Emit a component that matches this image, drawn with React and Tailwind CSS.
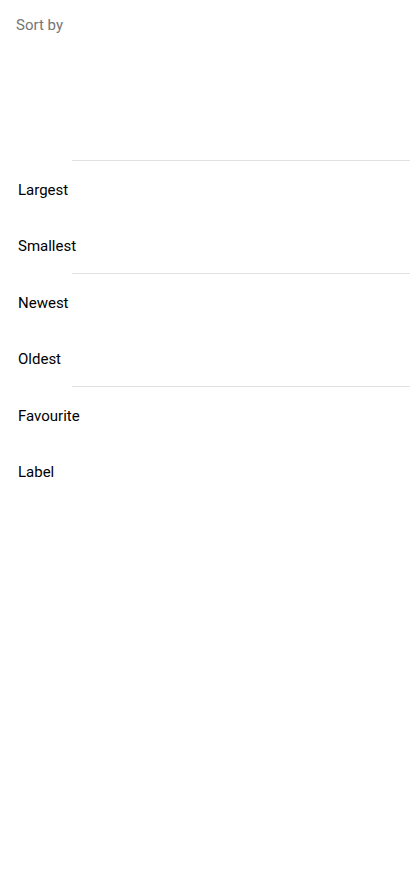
import React from 'react';

const groups = [
  ['Largest', 'Smallest'],
  ['Newest', 'Oldest'],
  ['Favourite', 'Label'],
];

const SortRow = ({ label }) => (
  <div className="h-[56px] flex items-center pt-[2px] pl-[18px] text-[15px] text-black">
    {label}
  </div>
);

const App = () => {
  return (
    <div
      className="w-[411px] h-[891px] bg-white overflow-hidden"
      style={{ fontFamily: 'Roboto, "Noto Sans", sans-serif' }}
    >
      <div className="h-[48px] flex items-center pt-[2px] pl-4 text-[15px] text-[#757575]">
        Sort by
      </div>
      <div className="h-[112px]" />
      {groups.map((group, i) => (
        <div key={i}>
          <div className="h-px bg-[#e0e0e0] ml-[72px] mr-px" />
          {group.map((label) => (
            <SortRow key={label} label={label} />
          ))}
        </div>
      ))}
    </div>
  );
};

export default App;
